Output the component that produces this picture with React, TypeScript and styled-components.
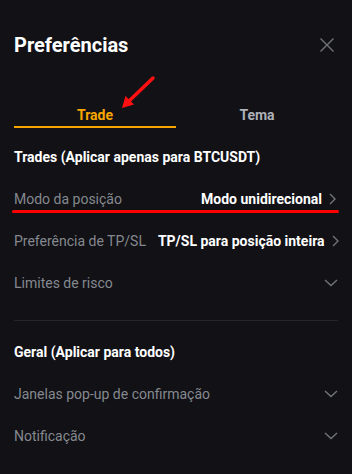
import React, { ReactElement, useState } from 'react'
import styled, { createGlobalStyle } from 'styled-components'

const GlobalStyle = createGlobalStyle`
  html, body {
    margin: 0;
    padding: 0;
    background: #111116;
  }
  body {
    font-family: Roboto, "Noto Sans", "Liberation Sans", sans-serif;
    -webkit-font-smoothing: antialiased;
  }
`

const Panel = styled.div`
  position: relative;
  width: 352px;
  height: 474px;
  box-sizing: border-box;
  padding: 30px 14px 0;
  background: #111116;
  color: #ffffff;
  overflow: hidden;
`

const Header = styled.div`
  display: flex;
  align-items: center;
  justify-content: space-between;
  height: 30px;
`

const Title = styled.h1`
  margin: 0;
  font-size: 20px;
  font-weight: 700;
  line-height: 30px;
`

const CloseButton = styled.button`
  display: flex;
  align-items: center;
  justify-content: center;
  width: 18px;
  height: 18px;
  margin-right: 2px;
  padding: 0;
  border: none;
  background: transparent;
  color: #71757a;
  cursor: pointer;
`

const Tabs = styled.div`
  display: grid;
  grid-template-columns: 1fr 1fr;
  margin-top: 44px;
`

const Tab = styled.button<{ $active: boolean }>`
  height: 24px;
  padding: 0;
  border: none;
  border-bottom: 2px solid ${(p) => (p.$active ? '#f7a600' : 'transparent')};
  background: transparent;
  font-family: inherit;
  font-size: 14px;
  font-weight: 700;
  line-height: 22px;
  color: ${(p) => (p.$active ? '#f7a600' : '#adb1b8')};
  cursor: pointer;
`

const SectionTitle = styled.div<{ $top: number }>`
  display: flex;
  align-items: center;
  height: 42px;
  margin-top: ${(p) => p.$top}px;
  font-size: 14px;
  font-weight: 700;
  color: #ffffff;
`

const Row = styled.div`
  display: flex;
  align-items: center;
  justify-content: space-between;
  gap: 12px;
  height: 42px;
  font-size: 14px;
`

const Label = styled.span`
  color: #85898f;
  white-space: nowrap;
`

const Value = styled.span`
  display: flex;
  align-items: center;
  gap: 4px;
  font-weight: 700;
  color: #ffffff;
  white-space: nowrap;
`

const Chevron = styled.span`
  display: flex;
  color: #71757a;
`

const Divider = styled.hr`
  margin: 16px 0 10px;
  border: none;
  border-top: 1px solid #26262c;
`

const Highlight = styled.div`
  position: absolute;
  left: 12px;
  top: 210px;
  width: 327px;
  height: 3px;
  border-radius: 2px;
  background: #ff0000;
`

const Arrow = styled.svg`
  position: absolute;
  left: 115px;
  top: 72px;
`

function ChevronRight(): ReactElement {
  return (
    <Chevron>
      <svg width="12" height="14" viewBox="0 0 12 14" fill="none">
        <path d="M4 2l5 5-5 5" stroke="currentColor" strokeWidth="1.4" />
      </svg>
    </Chevron>
  )
}

function ChevronDown(): ReactElement {
  return (
    <Chevron>
      <svg width="14" height="12" viewBox="0 0 14 12" fill="none">
        <path d="M1 3l6 5.5L13 3" stroke="currentColor" strokeWidth="1.4" />
      </svg>
    </Chevron>
  )
}

export default function App(): ReactElement {
  const [tab, setTab] = useState('trade')

  return (
    <>
      <GlobalStyle />
      <Panel>
        <Header>
          <Title>Preferências</Title>
          <CloseButton aria-label="Fechar">
            <svg width="16" height="16" viewBox="0 0 16 16" fill="none">
              <path d="M1.5 1.5l13 13M14.5 1.5l-13 13" stroke="currentColor" strokeWidth="1.4" />
            </svg>
          </CloseButton>
        </Header>

        <Tabs>
          <Tab $active={tab === 'trade'} onClick={() => setTab('trade')}>
            Trade
          </Tab>
          <Tab $active={tab === 'tema'} onClick={() => setTab('tema')}>
            Tema
          </Tab>
        </Tabs>

        <SectionTitle $top={8}>Trades (Aplicar apenas para BTCUSDT)</SectionTitle>
        <Row>
          <Label>Modo da posição</Label>
          <Value>
            Modo unidirecional
            <ChevronRight />
          </Value>
        </Row>
        <Row>
          <Label>Preferência de TP/SL</Label>
          <Value>
            TP/SL para posição inteira
            <ChevronRight />
          </Value>
        </Row>
        <Row>
          <Label>Limites de risco</Label>
          <ChevronDown />
        </Row>

        <Divider />

        <SectionTitle $top={0}>Geral (Aplicar para todos)</SectionTitle>
        <Row>
          <Label>Janelas pop-up de confirmação</Label>
          <ChevronDown />
        </Row>
        <Row>
          <Label>Notificação</Label>
          <ChevronDown />
        </Row>

        <Highlight />
        <Arrow width="44" height="42" viewBox="0 0 44 42" fill="none">
          <path d="M38 6L12 31" stroke="#ff1010" strokeWidth="3.5" strokeLinecap="round" />
          <path d="M7 36l3.5-12 8.5 8.5z" fill="#ff1010" />
        </Arrow>
      </Panel>
    </>
  )
}
